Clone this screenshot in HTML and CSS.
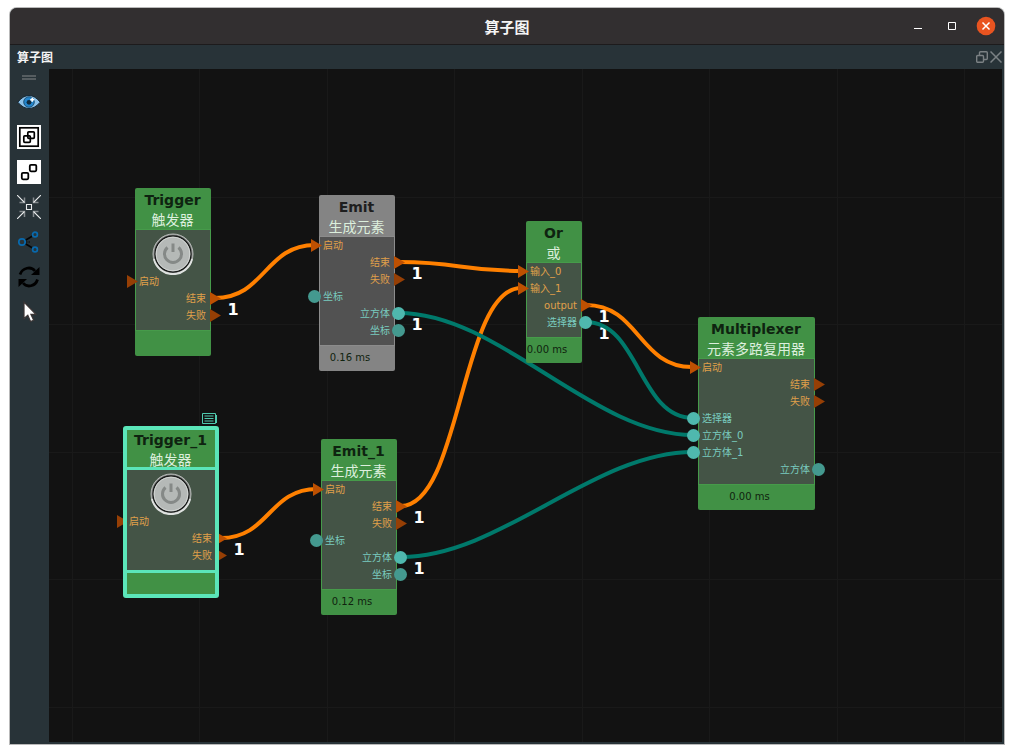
FILE: index.html
```html
<!DOCTYPE html>
<html lang="zh-CN">
<head>
<meta charset="utf-8">
<title>算子图</title>
<link rel="stylesheet" href="styles.css">
</head>
<body>
<div class="window">
  <header class="titlebar">
    <span class="titlebar-side"></span>
    <h1 class="titlebar-text">算子图</h1>
    <div class="titlebar-side window-buttons">
      <button class="window-button" type="button" aria-label="最小化"><svg width="20" height="20"><path d="M6 12.500h8" stroke="#fff" fill="none"/></svg></button>
      <button class="window-button" type="button" aria-label="最大化"><svg width="20" height="20"><path d="M6.500 6.500h7v7h-7z" stroke="#fff" fill="none"/></svg></button>
      <button class="window-button" type="button" aria-label="关闭"><svg width="20" height="20"><circle cx="10" cy="10" r="9.300" fill="#e95420"/><path d="M6.500 6.500l7 7M13.500 6.500l-7 7" stroke="#fff" stroke-width="1.500" fill="none"/></svg></button>
    </div>
  </header>
  <div class="dock-header">
    <h2 class="dock-title">算子图</h2>
    <div class="dock-buttons">
      <button class="dock-button" type="button" aria-label="浮动"><svg width="12" height="12" fill="none" stroke="#7b8184" stroke-width="1.400"><rect x="3.500" y=".7" width="7.800" height="7.800" rx="1"/><rect x=".7" y="4.500" width="6.800" height="6.800" rx="1" fill="#283338"/></svg></button>
      <button class="dock-button" type="button" aria-label="关闭面板"><svg width="12" height="12" fill="none" stroke="#7b8184" stroke-width="1.500"><path d="M.5.500l11 11M11.500.500l-11 11"/></svg></button>
    </div>
  </div>
  <div class="workspace">
    <nav class="toolbar" aria-label="工具">
      <span class="toolbar-grip"></span>
      <button class="tool" type="button" aria-label="显示"><svg viewBox="0 0 24 24"><path d="M.8 12.200Q6 5.500 12 5.500T23.200 12.200Q18 18.500 12 18.500T.8 12.200z" fill="#8cc2ea" stroke="#152733"/><circle cx="12" cy="12" r="5.300" fill="#2385cc" stroke="#14415f" stroke-width=".8"/><circle cx="12" cy="12.300" r="2.400" fill="#102b3e"/><path d="M15.200 7.800v4M13.200 9.800h4" stroke="#fff" stroke-width="1.600"/></svg></button>
      <button class="tool" type="button" aria-label="编组"><svg viewBox="0 0 24 24" fill="none" stroke="#000"><path d="M0 0h24v24H0z" fill="#fff" stroke="none"/><rect x="2.800" y="2.800" width="18.400" height="18.400" stroke-width="1.700"/><rect x="10.800" y="6.800" width="6.500" height="6.500" rx="1" stroke-width="1.700"/><rect x="6.800" y="10.800" width="6.500" height="6.500" rx="1" stroke-width="1.700"/></svg></button>
      <button class="tool" type="button" aria-label="取消编组"><svg viewBox="0 0 24 24" fill="none" stroke="#000" stroke-width="1.800"><path d="M0 0h24v24H0z" fill="#fff" stroke="none"/><rect x="12.800" y="4.800" width="6.500" height="6.500" rx="1.200"/><rect x="4.800" y="12.800" width="6.500" height="6.500" rx="1.200"/></svg></button>
      <button class="tool" type="button" aria-label="居中"><svg viewBox="0 0 24 24" fill="none"><path d="M7.500 2.500v5h-5M16.500 2.500v5h5M7.500 22v-5.500h-5M16.500 22v-5.500h5" stroke="#858b8e" stroke-width="1.500"/><path d="M0 0l7.500 7.500M24 0l-7.500 7.500M0 24l7.500-7.500M24 24l-7.500-7.500M9.500 9.500h5v5h-5z" stroke="#e8eaeb" stroke-width="1.100"/></svg></button>
      <button class="tool" type="button" aria-label="布局"><svg viewBox="0 0 24 24" fill="none"><path d="M8 10.500l7.500-4.500M8 13.500l7.500 4.500" stroke="#050505" stroke-width="1.500"/><path d="M9 12h5" stroke="#050505" stroke-dasharray="1.500 1"/><g stroke="#0869ad" stroke-width="1.700"><circle cx="5" cy="12" r="3.200"/><circle cx="18" cy="4.500" r="2.400"/><circle cx="18" cy="19.500" r="2.400"/></g></svg></button>
      <button class="tool" type="button" aria-label="刷新"><svg viewBox="0 0 24 24"><path d="M3 9.500C5.500 2.500 14 1 18 6M20.500 14.500C18.500 21.500 10 23 6 18" fill="none" stroke="#000" stroke-width="2.800"/><path d="M22.500 2v8h-8.500zM1.500 22v-8h8.500z" fill="#000"/></svg></button>
      <button class="tool" type="button" aria-label="选择"><svg viewBox="0 0 24 24"><path d="M7 2v16.500l3.800-3.300 2.700 6.300 3.200-1.300-2.800-5.900h5z" fill="#fff" stroke="#3b3535" stroke-width="1.200"/></svg></button>
    </nav>
    <main class="canvas">
      <svg class="wires" aria-label="连线">
        <g stroke="#191919" stroke-width="1">
          <path d="M23.500 0v2000M150.500 0v2000M278.500 0v2000M405.500 0v2000M533.500 0v2000M660.500 0v2000M788.500 0v2000M915.500 0v2000M0 128.500h3000M0 255.500h3000M0 383.500h3000M0 510.500h3000M0 638.500h3000"/>
        </g>
        <g class="counts">
          <text x="184" y="246">1</text>
          <text x="368" y="210">1</text>
          <text x="368" y="261">1</text>
          <text x="555" y="253">1</text>
          <text x="555" y="270">1</text>
          <text x="190" y="486">1</text>
          <text x="370" y="454">1</text>
          <text x="370" y="505">1</text>
        </g>
        <g class="wire flow">
          <path d="M166 229C216 229 216 176 266 176"/>
          <path d="M350 193C411 193 411 202 472 202"/>
          <path d="M352 437C412 437 412 219 472 219"/>
          <path d="M537 236C590 236 590 298 643 298"/>
          <path d="M172 469C220 469 220 420 268 420"/>
        </g>
        <g class="wire data">
          <path d="M350 244C450 244 544 366 644 366"/>
          <path d="M537 253C590 253 590 349 644 349"/>
          <path d="M352 488C452 488 544 383 644 383"/>
        </g>
      </svg>

      <section class="node trigger">
        <header class="node-head"><h3>Trigger</h3><p>触发器</p></header>
        <div class="node-body">
          <button class="knob" type="button" aria-label="触发 Trigger"><svg viewBox="0 0 42 42"><circle cx="21" cy="21" r="20" fill="#888b89" stroke="#b5b8b6"/><path d="M2 26a19.500 19.500 0 0 0 38 0" fill="none" stroke="#dfe2e0" stroke-width="2"/><circle cx="21" cy="21" r="18" fill="#b5b9b7" stroke="#191b1a" stroke-width="1.300"/><circle cx="21" cy="21" r="16.800" fill="none" stroke="#d2d5d3"/><path d="M15.500 14.500a8.500 8.500 0 1 0 11 0M21 10.500v8.500" fill="none" stroke="#858987" stroke-width="3"/></svg></button>
          <div class="row flow"><span class="in">启动</span></div>
          <div class="row flow"><span class="out linked">结束</span></div>
          <div class="row flow"><span class="out">失败</span></div>
        </div>
        <footer class="node-foot"></footer>
      </section>

      <section class="node emit inactive">
        <header class="node-head"><h3>Emit</h3><p>生成元素</p></header>
        <div class="node-body">
          <div class="row flow"><span class="in linked">启动</span></div>
          <div class="row flow"><span class="out linked">结束</span></div>
          <div class="row flow"><span class="out">失败</span></div>
          <div class="row data"><span class="in">坐标</span></div>
          <div class="row data"><span class="out linked">立方体</span></div>
          <div class="row data"><span class="out">坐标</span></div>
        </div>
        <footer class="node-foot">0.16 ms</footer>
      </section>

      <section class="node or">
        <header class="node-head"><h3>Or</h3><p>或</p></header>
        <div class="node-body">
          <div class="row flow"><span class="in linked">输入_0</span></div>
          <div class="row flow"><span class="in linked">输入_1</span></div>
          <div class="row flow"><span class="out linked">output</span></div>
          <div class="row data"><span class="out linked">选择器</span></div>
        </div>
        <footer class="node-foot">0.00 ms</footer>
      </section>

      <section class="node multiplexer">
        <header class="node-head"><h3>Multiplexer</h3><p>元素多路复用器</p></header>
        <div class="node-body">
          <div class="row flow"><span class="in linked">启动</span></div>
          <div class="row flow"><span class="out">结束</span></div>
          <div class="row flow"><span class="out">失败</span></div>
          <div class="row data"><span class="in linked">选择器</span></div>
          <div class="row data"><span class="in linked">立方体_0</span></div>
          <div class="row data"><span class="in linked">立方体_1</span></div>
          <div class="row data"><span class="out">立方体</span></div>
        </div>
        <footer class="node-foot">0.00 ms</footer>
      </section>

      <section class="node trigger-1 selected">
        <svg class="note" width="16" height="12" fill="none" stroke="#4fc9ae"><path d="M.5.500h13v10h-13zM14.500 2v8M2.500 3h9M2.500 5.500h9M2.500 8h9"/></svg>
        <header class="node-head"><h3>Trigger_1</h3><p>触发器</p></header>
        <div class="node-body">
          <button class="knob" type="button" aria-label="触发 Trigger_1"><svg viewBox="0 0 42 42"><circle cx="21" cy="21" r="20" fill="#888b89" stroke="#b5b8b6"/><path d="M2 26a19.500 19.500 0 0 0 38 0" fill="none" stroke="#dfe2e0" stroke-width="2"/><circle cx="21" cy="21" r="18" fill="#b5b9b7" stroke="#191b1a" stroke-width="1.300"/><circle cx="21" cy="21" r="16.800" fill="none" stroke="#d2d5d3"/><path d="M15.500 14.500a8.500 8.500 0 1 0 11 0M21 10.500v8.500" fill="none" stroke="#858987" stroke-width="3"/></svg></button>
          <div class="row flow"><span class="in">启动</span></div>
          <div class="row flow"><span class="out linked">结束</span></div>
          <div class="row flow"><span class="out">失败</span></div>
        </div>
        <footer class="node-foot"></footer>
      </section>

      <section class="node emit-1">
        <header class="node-head"><h3>Emit_1</h3><p>生成元素</p></header>
        <div class="node-body">
          <div class="row flow"><span class="in linked">启动</span></div>
          <div class="row flow"><span class="out linked">结束</span></div>
          <div class="row flow"><span class="out">失败</span></div>
          <div class="row data"><span class="in">坐标</span></div>
          <div class="row data"><span class="out linked">立方体</span></div>
          <div class="row data"><span class="out">坐标</span></div>
        </div>
        <footer class="node-foot">0.12 ms</footer>
      </section>
    </main>
  </div>
</div>
</body>
</html>
```

FILE: styles.css
```css
* {
  box-sizing: border-box;
}

body {
  margin: 0;
  min-height: 100vh;
  display: flex;
  padding: 8px 10px 10px;
  background: #fff;
  font-family: "DejaVu Sans", "Noto Sans CJK SC", sans-serif;
}

h1, h2, h3, p {
  margin: 0;
}

button {
  display: block;
  padding: 0;
  border: 0;
  background: none;
}

svg {
  display: block;
}

.window {
  flex: 1;
  display: flex;
  flex-direction: column;
  background: #283338;
  border-radius: 7px 7px 0 0;
  box-shadow: 0 0 0 1px #b9b9b9;
  overflow: hidden;
}

.titlebar {
  display: flex;
  align-items: center;
  height: 37px;
  padding: 0 8px;
  background: #322f30;
  border-bottom: 1px solid #1d1b1c;
}

.titlebar-side {
  flex: 1;
}

.titlebar-text {
  padding-top: 2px;
  color: #f4f4f4;
  font: bold 15px/20px "Noto Sans CJK SC", sans-serif;
}

.window-buttons {
  display: flex;
  justify-content: flex-end;
  gap: 14px;
}

.dock-header {
  display: flex;
  align-items: center;
  justify-content: space-between;
  height: 24px;
  padding: 0 2px 0 7px;
}

.dock-title {
  color: #f4f4f4;
  font: bold 12px/20px "Noto Sans CJK SC", sans-serif;
}

.dock-buttons {
  display: flex;
  gap: 2px;
}

.workspace {
  flex: 1;
  display: flex;
  padding: 0 2px 2px 0;
}

.toolbar {
  width: 39px;
  display: flex;
  flex-direction: column;
  align-items: center;
  gap: 11px;
  padding: 6px 2px 0 0;
}

.toolbar-grip {
  width: 14px;
  height: 5px;
  margin-bottom: -1px;
  border: solid #565d60;
  border-width: 2px 0;
}

.tool svg {
  width: 24px;
  height: 24px;
}

.canvas {
  flex: 1;
  position: relative;
  overflow: hidden;
  background: #121212;
}

.wires {
  position: absolute;
  inset: 0;
  width: 100%;
  height: 100%;
}

.counts {
  fill: #fff;
  font-size: 16px;
  font-weight: bold;
  text-anchor: middle;
}

.wire {
  fill: none;
  stroke-width: 4px;
}

.wire.flow {
  stroke: #ff8000;
}

.wire.data {
  stroke: #00796b;
}

/* Nodes sit freely on the canvas */
.node {
  --tone: #419145;
  --edge: #469b4a;
  --fill: #445446;
  position: absolute;
  width: 76px;
  border-radius: 2px;
  background: var(--tone);
}

.inactive {
  --tone: #848484;
  --edge: #8c8c8c;
  --fill: #525252;
}

.trigger { left: 86px; top: 119px; }
.emit { left: 270px; top: 126px; }
.or { left: 477px; top: 152px; width: 56px; }
.multiplexer { left: 649px; top: 248px; width: 117px; }
.trigger-1 { left: 76px; top: 359px; width: 92px; }
.emit-1 { left: 272px; top: 370px; }

.node-head {
  height: 41px;
  padding: 2px 1px 0 0;
  text-align: center;
  white-space: nowrap;
}

.node-head h3 {
  color: #0e2310;
  font-size: 14px;
  line-height: 20px;
}

.inactive h3 {
  color: #1e1e1e;
}

.node-head p {
  color: #dcefdd;
  font-size: 14px;
  line-height: 20px;
}

.node-body {
  padding: 0 0 6px;
  border: 1px solid var(--edge);
  background: var(--fill);
}

.node-foot {
  height: 25px;
  padding-right: 14px;
  color: #10230f;
  font-size: 10px;
  line-height: 23px;
  text-align: center;
  white-space: nowrap;
}

.knob {
  width: 42px;
  height: 43px;
  margin: 0 auto;
  padding-top: 3px;
}

.knob svg {
  width: 42px;
  height: 42px;
}

.row {
  position: relative;
  display: flex;
  height: 17px;
  padding: 0 4px 0 3px;
  font-size: 10px;
  line-height: 17px;
  white-space: nowrap;
}

.row.flow {
  color: #e0a04a;
}

.row.data {
  color: #79cbbf;
}

.out {
  margin-left: auto;
}

/* Port pins straddle the edge of the node */
.row span::after {
  content: "";
  position: absolute;
}

.flow span::after {
  top: 2px;
  width: 11px;
  height: 13px;
  background: #963f05;
  clip-path: polygon(0 0, 100% 50%, 0 100%);
}

.flow .in::after {
  left: -9px;
}

.flow .out::after {
  right: -11px;
}

.flow .linked::after {
  background: #bd5002;
}

.data span::after {
  top: 2px;
  width: 13px;
  height: 13px;
  border-radius: 50%;
  background: #44998f;
}

.data .in::after {
  left: -12px;
}

.data .out::after {
  right: -11px;
}

.data .linked::after {
  background: #4fb8ae;
}

.selected::after {
  content: "";
  position: absolute;
  inset: -2px;
  border: 4px solid #5be6b9;
  border-radius: 3px;
}

.selected .node-body {
  border-color: #5be6b9;
  box-shadow: 0 0 0 2px #5be6b9;
}

.note {
  position: absolute;
  top: -15px;
  right: -1px;
}
```
